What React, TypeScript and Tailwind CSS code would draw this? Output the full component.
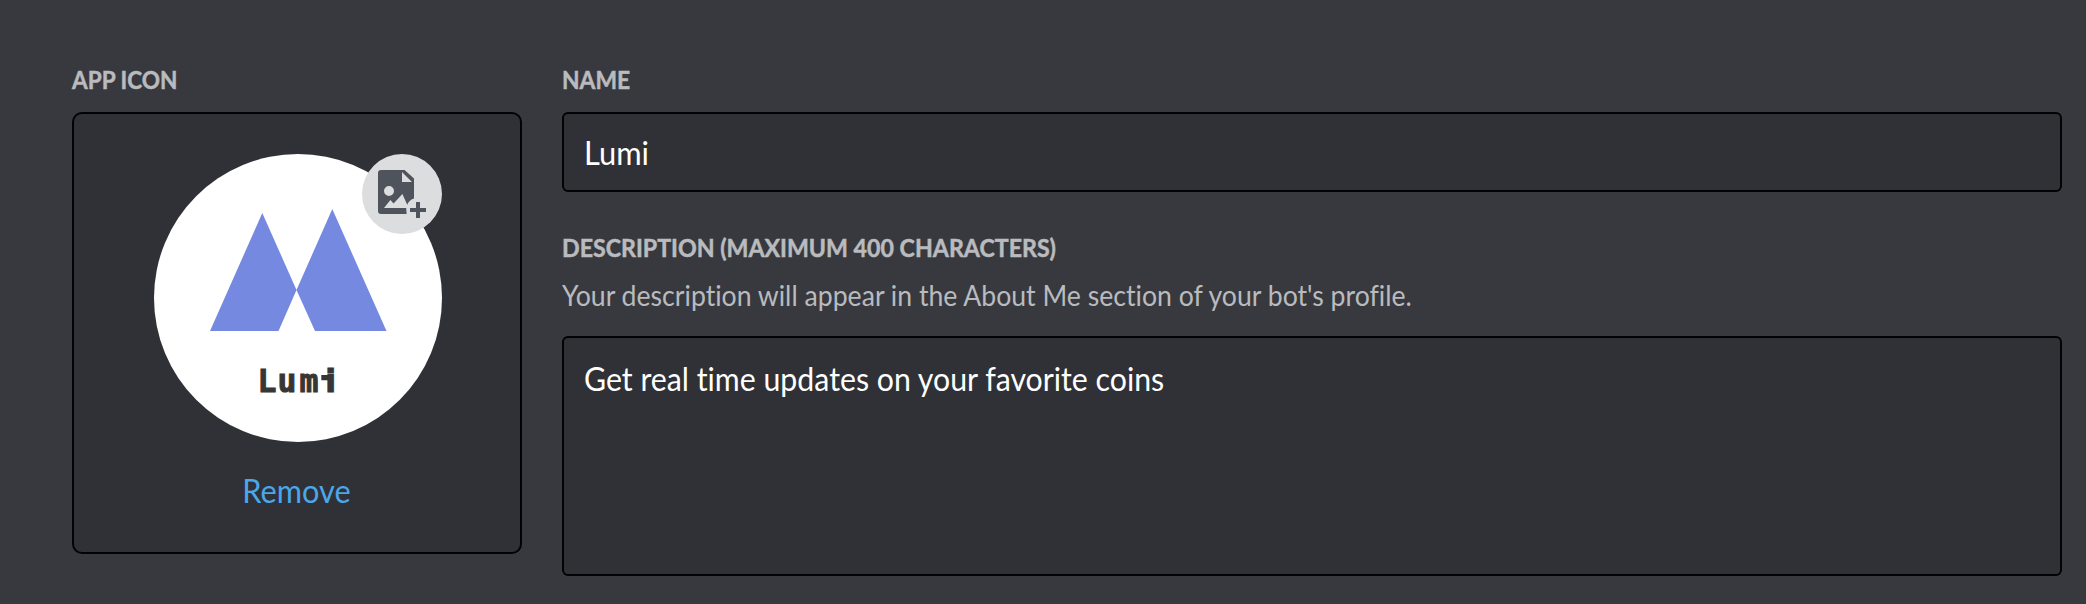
import type { ReactNode } from "react";

function Label({ children, className }: { children: ReactNode; className: string }) {
  return (
    <h2 className="h-8 text-2xl leading-8 font-bold whitespace-nowrap text-[#b9bbbf] uppercase [-webkit-text-stroke:0.5px_#b9bbbf]">
      <span className={`inline-block origin-left ${className}`}>{children}</span>
    </h2>
  );
}

function ImagePlusIcon() {
  return (
    <svg viewBox="0 0 24 24" className="size-12 fill-[#4f545c]">
      <path
        fillRule="evenodd"
        d="M1.5 0H13.3L18 4.2V14.2C16.5 14.6 15.3 15.6 14.6 17.4L12.2 12L7.8 16.8L6.2 15L3 19H14.1L14.3 22H1.5Q0 22 0 20.5V1.5Q0 0 1.5 0ZM12 1V6H17ZM5.5 8A2.5 2.5 0 1 0 5.5 13A2.5 2.5 0 1 0 5.5 8Z"
      />
      <path d="M19 16H21V19H24V21H21V24H19V21H16V19H19Z" />
    </svg>
  );
}

function LumiLogo() {
  return (
    <svg viewBox="0 0 288 288" className="size-72 rounded-full bg-white">
      <path
        className="fill-[#7489df]"
        d="M108.3 59L142.5 136L178.3 55L232.5 177H161L142.5 136L124.5 177H56Z"
      />
      <g className="fill-[#363636]">
        <text
          x="103.5 123.5 145.5"
          y="238.3"
          className="stroke-[#363636] stroke-[1] font-['DejaVu_Sans_Mono',monospace] text-[31.5px] font-bold"
        >
          Lum<tspan x="171.3" className="font-['DejaVu_Sans',sans-serif]">i</tspan>
        </text>
        <path d="M167.3 221H176V226.3H167.3Z" />
      </g>
    </svg>
  );
}

export default function App() {
  return (
    <main className="flex h-[604px] w-full gap-10 bg-[#38393e] pt-16 pr-6 pl-[72px] font-['Lato',sans-serif] [font-variant-ligatures:none]">
      <section className="w-[450px] shrink-0">
        <Label className="scale-x-[0.94]">App Icon</Label>
        <div className="mt-4 flex h-[442px] flex-col items-center rounded-[10px] border-2 border-[#020204] bg-[#303136] pt-10 pl-0.5">
          <div className="relative size-72">
            <LumiLogo />
            <button className="absolute top-0 right-0 flex size-20 items-center justify-center rounded-full bg-[#dcddde]">
              <ImagePlusIcon />
            </button>
          </div>
          <button className="mt-[27px] mr-[3px] scale-x-[0.96] text-[32px] leading-[44px] text-[#4ba6ea]">
            Remove
          </button>
        </div>
      </section>

      <section className="flex min-w-0 flex-1 flex-col">
        <Label className="scale-x-[0.95]">Name</Label>
        <div className="mt-4 flex h-20 items-center rounded-md border-2 border-[#020204] bg-[#303136] pt-0.5 pl-5 text-[32px] text-white">
          <span className="origin-left scale-x-[0.965]">Lumi</span>
        </div>

        <div className="mt-10">
          <Label className="scale-x-[0.966]">Description (maximum 400 characters)</Label>
        </div>
        <p className="mt-[11px] h-10 text-[28px] leading-10 whitespace-nowrap text-[#b9bbbf]">
          <span className="inline-block origin-left scale-x-[0.951]">
            Your description will appear in the About Me section of your bot's profile.
          </span>
        </p>
        <div className="mt-[21px] h-60 rounded-md border-2 border-[#020204] bg-[#303136] pt-[19px] pl-5 text-[32px] leading-[44px] whitespace-nowrap text-white">
          <span className="inline-block origin-left scale-x-[0.946]">Get real time updates on your favorite coins</span>
        </div>
      </section>
    </main>
  );
}
